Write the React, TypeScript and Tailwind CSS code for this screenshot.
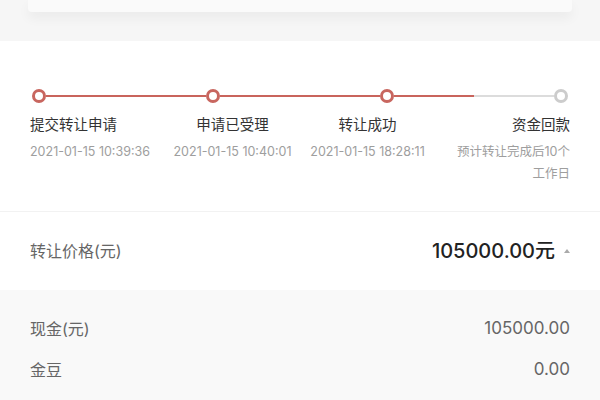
export default function App() {
  const steps = [
    { title: '提交转让申请', sub: ['2021-01-15 10:39:36'], align: 'items-start text-left' },
    { title: '申请已受理', sub: ['2021-01-15 10:40:01'], align: 'items-center text-center' },
    { title: '转让成功', sub: ['2021-01-15 18:28:11'], align: 'items-center text-center' },
    { title: '资金回款', sub: ['预计转让完成后10个', '工作日'], align: 'items-end text-right' },
  ]

  return (
    <div className="w-[600px] h-[400px] overflow-hidden bg-white font-[Inter,'Noto_Sans_CJK_SC',sans-serif]">
      <div className="h-[41px] bg-[#f6f6f6] px-[28px]">
        <div className="h-[12px] rounded-b-[4px] bg-[#fafafa] shadow-[0_6px_12px_rgba(0,0,0,0.05)]" />
      </div>

      <section className="h-[171px] border-b border-[#f2f2f2] bg-white px-[30px] pt-[48px]">
        <div className="flex items-center px-[2px]">
          <Dot active />
          <div className="h-[2px] flex-1 bg-[#c9645c]" />
          <Dot active />
          <div className="h-[2px] flex-1 bg-[#c9645c]" />
          <Dot active />
          <div className="flex h-[2px] flex-1">
            <div className="h-full flex-1 bg-[#c9645c]" />
            <div className="h-full flex-1 bg-[#dcdcdc]" />
          </div>
          <Dot />
        </div>

        <div className="mt-[12px] grid grid-cols-4">
          {steps.map((s) => (
            <div key={s.title} className={`flex flex-col ${s.align}`}>
              <p className="whitespace-nowrap text-[14.5px] leading-[20px] text-[#333]">{s.title}</p>
              <div className="mt-[6px] text-[12.5px] leading-[22px] text-[#9e9e9e]">
                {s.sub.map((line) => (
                  <p key={line} className="whitespace-nowrap">
                    {line}
                  </p>
                ))}
              </div>
            </div>
          ))}
        </div>
      </section>

      <div className="flex h-[78px] items-center justify-between bg-white px-[30px]">
        <span className="text-[16px] text-[#666]">转让价格(元)</span>
        <div className="flex items-center gap-[9px]">
          <span className="text-[20px] font-medium text-[#222]">105000.00元</span>
          <span className="h-0 w-0 border-x-[3px] border-b-[4px] border-x-transparent border-b-[#aaa]" />
        </div>
      </div>

      <div className="h-[110px] bg-[#f9f9f9] px-[30px] pt-[18px]">
        <div className="flex h-[41px] items-center justify-between text-[16px] text-[#666]">
          <span>现金(元)</span>
          <span className="text-[17px]">105000.00</span>
        </div>
        <div className="flex h-[41px] items-center justify-between text-[16px] text-[#666]">
          <span>金豆</span>
          <span className="text-[17px]">0.00</span>
        </div>
      </div>
    </div>
  )
}

function Dot({ active = false }: { active?: boolean }) {
  return (
    <span
      className={`h-[14px] w-[14px] shrink-0 rounded-full border-[3px] bg-white ${
        active ? 'border-[#c8665f]' : 'border-[#cccccc]'
      }`}
    />
  )
}
